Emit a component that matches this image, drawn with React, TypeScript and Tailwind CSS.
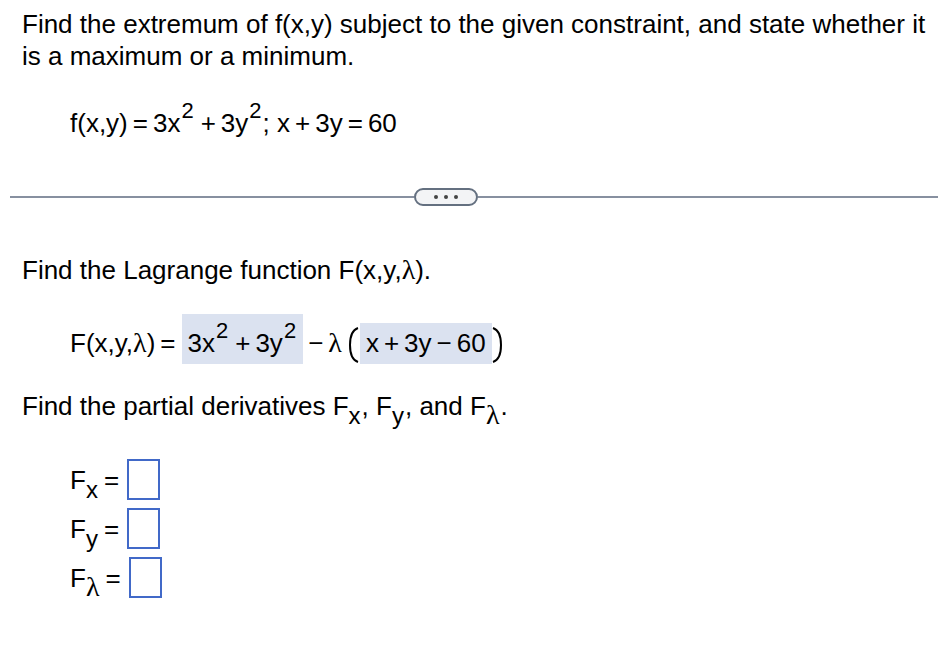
import type { ReactNode } from "react";

function Sup({ children }: { children: ReactNode }) {
  return (
    <sup className="relative -top-[14px] mx-px align-baseline text-[22px] leading-none">
      {children}
    </sup>
  );
}

function Sub({ children }: { children: ReactNode }) {
  return <sub className="relative top-[9px] mr-px align-baseline text-2xl leading-none">{children}</sub>;
}

function Lambda() {
  return <span className="font-['Liberation_Serif',serif] text-[28px] leading-none">λ</span>;
}

function Op({ children }: { children: ReactNode }) {
  return <span className="mx-[5px]">{children}</span>;
}

function Squares() {
  return (
    <>
      3x<Sup>2</Sup>
      <span className="ml-[6px] mr-[5px]">+</span>3y<Sup>2</Sup>
    </>
  );
}

function Derivative({ id, label, name }: { id: string; label: ReactNode; name: string }) {
  return (
    <div className="flex items-center">
      <label htmlFor={id} className="mr-2 whitespace-nowrap">
        F<Sub>{label}</Sub>
        <span className="ml-[5px]">=</span>
      </label>
      <input
        id={id}
        type="text"
        aria-label={name}
        className="h-[41px] w-[33px] border-2 border-[#4169c8] bg-white px-1 outline-none"
      />
    </div>
  );
}

export default function App() {
  return (
    <main className="min-h-screen bg-white pt-2 font-['Liberation_Sans',Arial,sans-serif] text-[26px] leading-8 text-black">
      <section className="pl-[22px] pr-[14px]">
        <p>
          Find the extremum of f(x,y) subject to the given constraint, and state whether it is a
          maximum or a minimum.
        </p>
        <p className="mt-[35px] pl-12">
          f(x,y)<Op>=</Op>
          <Squares />; x<Op>+</Op>3y<Op>=</Op>60
        </p>
      </section>

      <div className="mt-[49px] flex items-center pl-[10px] pr-[14px]">
        <div className="h-[2px] w-[404px] shrink bg-[#8790a0]" />
        <button
          type="button"
          aria-label="Show more"
          className="flex h-[18px] w-16 shrink-0 items-center justify-center gap-[6px] rounded-full border-2 border-[#647080] bg-[#f3f4f6]"
        >
          <span className="size-1 rounded-full bg-[#444]" />
          <span className="size-1 rounded-full bg-[#444]" />
          <span className="size-1 rounded-full bg-[#444]" />
        </button>
        <div className="h-[2px] flex-1 bg-[#8790a0]" />
      </div>

      <section className="pl-[22px] pr-[14px]">
        <p className="mt-12">
          Find the Lagrange function F(x,y,
          <Lambda />
          ).
        </p>
        <div className="mt-7 flex items-end pl-12">
          <span className="mr-px pb-[5px]">
            F(x,y,
            <Lambda />)<Op>=</Op>
          </span>
          <span className="bg-[#dbe2f0] px-[6px] pb-[5px] pt-[13px]">
            <Squares />
          </span>
          <span className="ml-[5px] pb-[5px]">
            −
            <span className="ml-[5px]">
              <Lambda />
            </span>
          </span>
          <svg
            className="ml-[6px] h-10 w-3"
            viewBox="0 0 12 40"
            fill="none"
            stroke="black"
            strokeWidth="2"
            aria-hidden="true"
          >
            <path d="M10 4C4 6 2 13 2 21S4 36 10 38" />
          </svg>
          <span className="bg-[#dbe2f0] px-[6px] pb-[5px] pt-1">
            x<Op>+</Op>3y<Op>−</Op>60
          </span>
          <svg
            className="h-10 w-3"
            viewBox="0 0 12 40"
            fill="none"
            stroke="black"
            strokeWidth="2"
            aria-hidden="true"
          >
            <path d="M1 4C7 6 9 13 9 21S7 36 1 38" />
          </svg>
        </div>
        <p className="mt-[26px]">
          Find the partial derivatives F<Sub>x</Sub>, F<Sub>y</Sub>, and F
          <Sub>
            <Lambda />
          </Sub>
          .
        </p>
        <div className="mt-[37px] flex flex-col gap-2 pl-12">
          <Derivative id="fx" label="x" name="F x" />
          <Derivative id="fy" label="y" name="F y" />
          <Derivative id="fl" label={<Lambda />} name="F lambda" />
        </div>
      </section>
    </main>
  );
}
